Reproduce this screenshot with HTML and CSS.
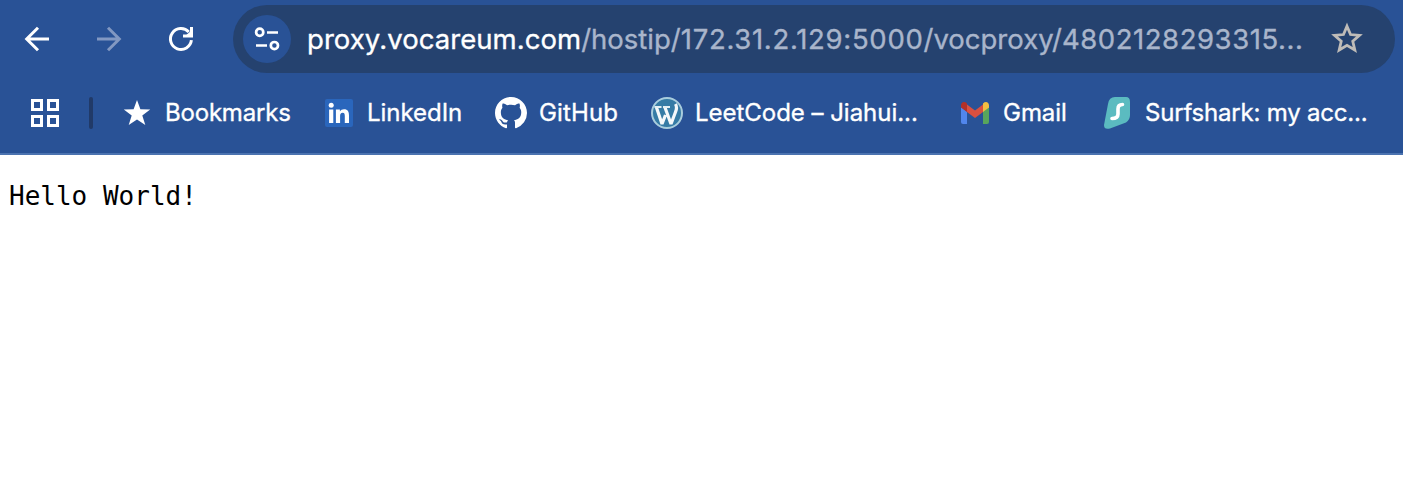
FILE: index.html
```html
<!DOCTYPE html>
<html lang="en">
<head>
<meta charset="utf-8">
<title>Hello World</title>
<link rel="stylesheet" href="styles.css">
</head>
<body>
<header class="chrome">
  <div class="toolbar">
    <nav class="nav">
      <svg class="nav-icon" viewBox="0 0 32 32"><path d="M28 16H6M17 4.700L5.700 16L17 27.300"/></svg>
      <svg class="nav-icon disabled" viewBox="0 0 32 32"><path d="M4 16H26M15 4.700L26.300 16L15 27.300"/></svg>
      <svg class="nav-icon" viewBox="0 0 32 32"><path d="M26.400 17.200A10.500 10.500 0 1 1 23.800 9M26.500 4V12.900H18"/><path class="tip" d="M27 7V14H19Z"/></svg>
    </nav>
    <div class="omnibox">
      <span class="site-info">
        <svg width="32" height="32" viewBox="0 0 32 32"><circle cx="8.700" cy="9.300" r="3.600"/><path d="M16 9.500H27M5 22.500H16"/><circle cx="23.400" cy="22.600" r="3.600"/></svg>
      </span>
      <span class="url"><span class="host">proxy.vocareum.com</span><span class="path">/hostip/<span class="address">172.31.2.129:5000</span>/vocproxy/<span class="session">4802128293315...</span></span></span>
      <svg class="save" width="34" height="34" viewBox="0 0 34 34"><path d="M17 9.500L19.200 14.700L24.800 15.200L20.600 18.900L21.900 24.400L17 21.500L12.100 24.400L13.400 18.900L9.200 15.200L14.800 14.700Z" transform="translate(17 17) scale(1.600) translate(-17 -17.500)"/></svg>
    </div>
  </div>
  <div class="bookmarks">
    <svg class="apps" width="28" height="28" viewBox="0 0 28 28"><path d="M1.500 1.500H10.500V10.500H1.500ZM17.500 1.500H26.500V10.500H17.500ZM1.500 17.500H10.500V26.500H1.500ZM17.500 17.500H26.500V26.500H17.500Z"/></svg>
    <i class="divider"></i>
    <div class="item w-bookmarks"><svg viewBox="0 0 32 32"><path fill="#fff" d="M16 3L19.400 12.300L29.200 12.500L21.300 18.500L24.300 28L16 22.400L7.700 28L10.700 18.500L2.800 12.500L12.600 12.300Z"/></svg><span class="label tight">Bookmarks</span></div>
    <div class="item w-linkedin"><svg viewBox="0 0 32 32"><rect x="2" y="2" width="28" height="28" rx="2" fill="#2a66bc"/><g fill="#fff"><circle cx="8.200" cy="8.300" r="2.500"/><path d="M6.100 12.500H10.300V26H6.100ZM12.900 12.500H16.900V14.400C17.700 13 19.200 12.200 21 12.200C25 12.200 26 14.800 26 18.400V26H21.800V19.200C21.800 17.500 21.600 15.800 19.700 15.800C17.700 15.800 17.100 17.300 17.100 19.200V26H12.900Z"/></g></svg><span class="label">LinkedIn</span></div>
    <div class="item w-github"><svg viewBox="0 0 16 16"><path fill="#fff" d="M8 0C3.580 0 0 3.580 0 8c0 3.540 2.290 6.530 5.470 7.590.4.070.55-.17.55-.38 0-.19-.01-.82-.01-1.490-2.010.37-2.530-.49-2.690-.94-.09-.23-.48-.94-.82-1.130-.28-.15-.68-.52-.01-.53.63-.01 1.080.58 1.230.82.72 1.210 1.870.87 2.330.66.07-.52.28-.87.51-1.070-1.780-.2-3.640-.89-3.640-3.950 0-.87.31-1.590.82-2.150-.08-.2-.36-1.020.08-2.120 0 0 .67-.21 2.200.82.64-.18 1.320-.27 2-.27s1.360.09 2 .27c1.530-1.040 2.200-.82 2.200-.82.44 1.100.16 1.920.08 2.120.51.56.82 1.270.82 2.150 0 3.070-1.870 3.750-3.650 3.950.29.25.54.73.54 1.480 0 1.070-.01 1.930-.01 2.200 0 .21.15.46.55.38A8.010 8.010 0 0 0 16 8c0-4.420-3.580-8-8-8z"/></svg><span class="label open">GitHub</span></div>
    <div class="item w-leetcode"><svg viewBox="0 0 32 32"><circle cx="16" cy="16" r="15" fill="#357ba5" stroke="#a9cddd" stroke-width="2"/><path d="M5.500 10.500L11 27L14.500 18M14 10.500L20 27L24.500 15Q26.500 10.500 24.500 7" fill="none" stroke="#f4f8fa" stroke-width="3.200" stroke-linejoin="bevel"/><path d="M3.500 10H10.500M12 10H19" stroke="#e3eff4" stroke-width="2"/></svg><span class="label">LeetCode – Jiahui...</span></div>
    <div class="item w-gmail"><svg viewBox="0 0 32 32"><path fill="#5186ec" d="M2 10L8 14.500V27H4Q2 27 2 25Z"/><path fill="#58a55c" d="M24 14.500L30 10V25Q30 27 28 27H24Z"/><path fill="#d95040" d="M8 7.500L16 13.500L24 7.500V15L16 21L8 15Z"/><path fill="#b23128" d="M2 11V8.500C2 5 5.500 4 8 6.500V15L2 10.500Z"/><path fill="#f2bf42" d="M30 11V8.500C30 5 26.500 4 24 6.500V15L30 10.500Z"/></svg><span class="label">Gmail</span></div>
    <div class="item"><svg viewBox="0 0 32 32"><path fill="#5bbbc0" d="M14 0H25Q29 0 29 5V18Q29 23 25 25.500L9 31.500Q3 33 3 28L7 7Q8 0 14 0Z"/><path fill="none" stroke="#fff" stroke-width="3.600" stroke-linecap="round" d="M21.500 7.500C18 7.500 17 9.500 17 12V17C17 20.500 14.500 21.500 11 21.500"/></svg><span class="label tight">Surfshark: my acc...</span></div>
  </div>
</header>
<pre class="content">Hello World!</pre>
</body>
</html>
```
FILE: styles.css
```css
* { box-sizing: border-box; }
body {
  margin: 0;
  background: #fff;
  overflow: hidden;
  font-family: Inter, "Liberation Sans", sans-serif;
}
.chrome {
  height: 155px;
  background: #295296;
  border-bottom: 2px solid #4b73b0;
}
.toolbar {
  display: flex;
  height: 78px;
  padding: 5px 8px 5px 21px;
}
.nav {
  display: flex;
  align-items: center;
  gap: 40px;
  width: 212px;
}
.nav-icon {
  width: 32px;
  height: 32px;
  flex: none;
  fill: none;
  stroke: #fff;
  stroke-width: 3;
}
.nav-icon .tip { fill: #fff; stroke: none; }
.disabled { stroke: #8298c2; }
.omnibox {
  display: flex;
  align-items: center;
  flex: 1;
  height: 68px;
  padding: 0 31px 0 10px;
  border-radius: 34px;
  background: #25426f;
}
.site-info {
  display: grid;
  place-items: center;
  width: 48px;
  height: 48px;
  flex: none;
  border-radius: 50%;
  background: #295296;
}
.site-info svg { fill: none; stroke: #fff; stroke-width: 2.700; }
.url {
  flex: 1;
  margin-left: 16px;
  font-size: 27.500px;
  line-height: 34px;
  white-space: nowrap;
  -webkit-text-stroke-width: 0.350px;
}
.host { color: #fff; letter-spacing: 0.060px; }
.path { color: #a9b5cb; }
.address { letter-spacing: 0.700px; }
.session { letter-spacing: 0.550px; }
.save { fill: none; stroke: #bfbcb8; stroke-width: 1.750; flex: none; }
.bookmarks {
  display: flex;
  align-items: center;
  height: 70px;
  padding-left: 31px;
}
.apps { fill: none; stroke: #fff; stroke-width: 3; }
.divider {
  width: 4px;
  height: 32px;
  margin: 0 28px 0 30px;
  border-radius: 2px;
  background: #213a68;
}
.item { display: flex; align-items: center; gap: 12px; flex: none; }
.item svg { width: 32px; height: 32px; flex: none; }
.label {
  color: #fff;
  font-size: 24px;
  letter-spacing: -0.030px;
  line-height: 32px;
  white-space: nowrap;
  -webkit-text-stroke-width: 0.350px;
}
.tight { letter-spacing: -0.200px; }
.open { letter-spacing: 0.150px; }
.w-bookmarks { width: 202px; }
.w-linkedin { width: 172px; }
.w-github { width: 156px; }
.w-leetcode { width: 308px; }
.w-gmail { width: 142px; }
.content {
  margin: 25px 9px;
  color: #000;
  font: 26px/32px "DejaVu Sans Mono", monospace;
}
```
